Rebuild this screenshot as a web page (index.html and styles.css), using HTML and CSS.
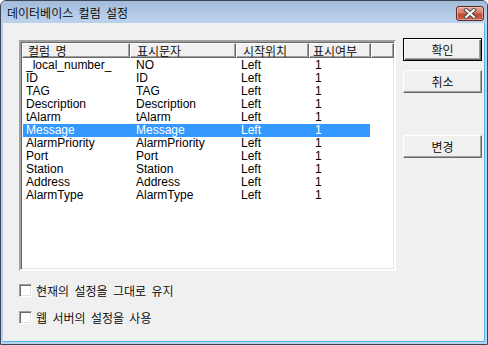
FILE: index.html
```html
<!DOCTYPE html>
<html lang="ko">
<head>
<meta charset="utf-8">
<link rel="stylesheet" href="styles.css">
</head>
<body>
<div class="window">
  <div class="titlebar">
    <span class="title ko">데이터베이스 컬럼 설정</span>
    <span class="close">
      <svg width="14" height="11" viewBox="0 0 14 11">
        <path d="M3 2 L11 9 M11 2 L3 9" stroke="#4a4a4a" stroke-width="4" stroke-linecap="square" fill="none"/>
        <path d="M3 2 L11 9 M11 2 L3 9" stroke="#ffffff" stroke-width="2" stroke-linecap="square" fill="none"/>
      </svg>
    </span>
  </div>
  <div class="client">
    <div class="main">
      <div class="listbox">
        <div class="header">
          <div class="hcell c1 ko">컬럼 명</div>
          <div class="hcell c2 ko">표시문자</div>
          <div class="hcell c3 ko">시작위치</div>
          <div class="hcell c4 ko">표시여부</div>
          <div class="hcell filler"></div>
        </div>
        <div class="rows">
          <div class="row"><span>_local_number_</span><span>NO</span><span>Left</span><span>1</span></div>
          <div class="row"><span>ID</span><span>ID</span><span>Left</span><span>1</span></div>
          <div class="row"><span>TAG</span><span>TAG</span><span>Left</span><span>1</span></div>
          <div class="row"><span>Description</span><span>Description</span><span>Left</span><span>1</span></div>
          <div class="row"><span>tAlarm</span><span>tAlarm</span><span>Left</span><span>1</span></div>
          <div class="row selected"><span>Message</span><span>Message</span><span>Left</span><span>1</span></div>
          <div class="row"><span>AlarmPriority</span><span>AlarmPriority</span><span>Left</span><span>1</span></div>
          <div class="row"><span>Port</span><span>Port</span><span>Left</span><span>1</span></div>
          <div class="row"><span>Station</span><span>Station</span><span>Left</span><span>1</span></div>
          <div class="row"><span>Address</span><span>Address</span><span>Left</span><span>1</span></div>
          <div class="row"><span>AlarmType</span><span>AlarmType</span><span>Left</span><span>1</span></div>
        </div>
      </div>
      <label class="check first"><span class="box"></span><span class="label ko">현재의 설정을 그대로 유지</span></label>
      <label class="check second"><span class="box"></span><span class="label ko">웹 서버의 설정을 사용</span></label>
    </div>
    <div class="buttons">
      <button class="btn default ko">확인</button>
      <button class="btn cancel ko">취소</button>
      <button class="btn change ko">변경</button>
    </div>
  </div>
</div>
</body>
</html>
```

FILE: styles.css
```css
* { box-sizing: border-box; }

html, body {
  margin: 0;
  padding: 0;
  background: #ffffff;
}

body {
  font-family: "Liberation Sans", "Noto Sans CJK KR", sans-serif;
  font-size: 12px;
  color: #000;
}

.ko {
  font-family: "Noto Sans CJK KR", sans-serif;
  font-weight: 350;
  word-spacing: 2px;
}

.window {
  width: 488px;
  height: 345px;
  border: 1px solid #3a4656;
  border-radius: 6px 6px 0 0;
  background: #b9d1ea;
  display: flex;
  flex-direction: column;
  overflow: hidden;
}

.titlebar {
  height: 22px;
  flex: none;
  display: flex;
  align-items: center;
  justify-content: space-between;
  padding: 0 3px 0 6px;
  background: linear-gradient(#a3bcd9, #b3cbe6 60%, #bad2ec);
}

.title {
  font-size: 12px;
  line-height: 14px;
  color: #000;
  padding-top: 1px;
}

.close {
  width: 28px;
  height: 15px;
  margin-top: 2px;
  border: 1px solid #5e2a22;
  border-radius: 3px;
  background: linear-gradient(#e6a99b, #d77a66 45%, #c04a31 55%, #c9634c);
  display: flex;
  align-items: center;
  justify-content: center;
  box-shadow: inset 0 0 0 1px rgba(255, 220, 210, 0.5);
}

.client {
  flex: 1;
  margin: 0 2px 2px 2px;
  background: #f0f0f0;
  display: flex;
  padding: 15px 0 0 16px;
  border-right: 1px solid #4fb6e6;
  border-bottom: 1px solid #4fb6e6;
}

.main {
  display: flex;
  flex-direction: column;
}

.listbox {
  margin-top: 2px;
  width: 377px;
  height: 231px;
  background: #fff;
  border-style: solid;
  border-width: 2px;
  border-color: #a0a0a0 #ffffff #ffffff #a0a0a0;
  box-shadow: inset 1px 1px 0 #696969, inset -1px -1px 0 #e3e3e3;
  padding: 1px 0 0 1px;
}

.header {
  display: grid;
  grid-template-columns: 108px 106px 73px 62px 23px;
  height: 15px;
}

.hcell {
  background: #f0f0f0;
  line-height: 13px;
  font-size: 12px;
  padding-left: 6px;
  white-space: nowrap;
  overflow: hidden;
  border-top: 1px solid #ffffff;
  border-left: 1px solid #ffffff;
  border-right: 1px solid #696969;
  border-bottom: 1px solid #696969;
  box-shadow: inset -1px -1px 0 #a0a0a0;
}

.hcell.c1 { padding-left: 5px; }
.hcell.c4 { padding-left: 3px; }

.rows {
  padding-top: 1px;
}

.row {
  display: grid;
  grid-template-columns: 110px 105px 74px 55px;
  width: 347px;
  height: 13px;
  margin-left: 1px;
  padding-left: 3px;
  line-height: 13px;
  white-space: nowrap;
}

.row span {
  overflow: hidden;
}

.row.selected {
  background: #3399ff;
  color: #fff;
}

.check {
  display: flex;
  align-items: center;
  height: 13px;
  line-height: 13px;
}

.check.first { margin-top: 13px; }
.check.second { margin-top: 14px; }

.box {
  width: 13px;
  height: 13px;
  flex: none;
  border-style: solid;
  border-width: 1px;
  border-color: #a0a0a0 #ffffff #ffffff #a0a0a0;
  background: #fff;
  box-shadow: inset 1px 1px 0 #696969, inset -1px -1px 0 #e3e3e3;
  margin-right: 4px;
}

.label {
  font-size: 12px;
}

.buttons {
  display: flex;
  flex-direction: column;
  margin-left: 7px;
}

.btn {
  width: 79px;
  height: 23px;
  font-size: 12px;
  line-height: 13px;
  color: #000;
  background: #f0f0f0;
  padding: 0;
  border-style: solid;
  border-width: 1px;
  border-color: #ffffff #696969 #696969 #ffffff;
  box-shadow: inset -1px -1px 0 #a0a0a0;
}

.btn.default {
  border: 1px solid #000;
  box-shadow: inset 1px 1px 0 #ffffff, inset -1px -1px 0 #696969, inset -2px -2px 0 #a0a0a0;
}

.btn.cancel { margin-top: 9px; }
.btn.change { margin-top: 42px; }
```
